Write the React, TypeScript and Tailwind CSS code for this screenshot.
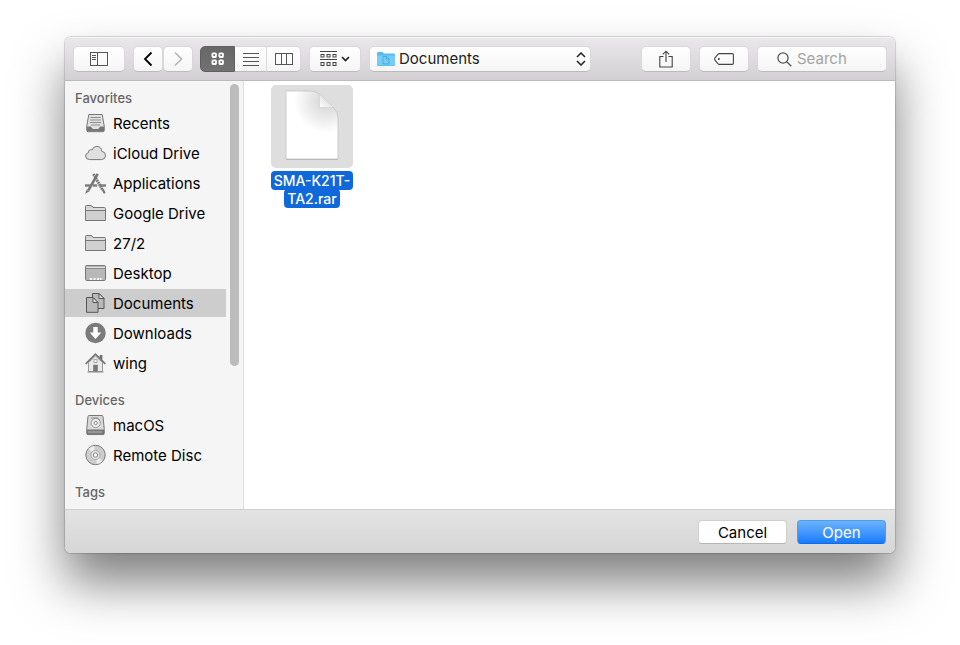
import { useState } from "react";
import type { ReactNode } from "react";

type Item = { name: string; icon: ReactNode };

function SidebarIcon({ children }: { children: ReactNode }) {
  return (
    <svg
      viewBox="0 0 22 22"
      className="w-[22px] h-[22px] flex-shrink-0"
      fill="none"
      stroke="#777"
      aria-hidden="true"
    >
      {children}
    </svg>
  );
}

const folderIcon = (
  <SidebarIcon>
    <path d="M1.5 18.5V4.5Q1.5 3.5 2.5 3.5H7.5L9 5.5H20.5Q21.5 5.5 21.5 6.5V18.5Z" fill="#d0d0d0" />
    <path d="M2 8.5H21" />
    <path d="M2.5 7H20.5" stroke="#e6e6e6" />
  </SidebarIcon>
);

const favorites: Item[] = [
  {
    name: "Recents",
    icon: (
      <SidebarIcon>
        <path d="M4.8 2.5H18.2L20.3 14.5V18.5Q20.3 19.7 19 19.7H4Q2.7 19.7 2.7 18.5V14.5Z" fill="#e2e2e2" />
        <path d="M3 14.5H7Q8 17 9.5 17H13.5Q15 17 16 14.5H20V19.3H3Z" fill="#777" stroke="none" />
        <path d="M6.5 5.5H16.5M6.2 8H16.8M5.8 10.5H17.2M7 13H16" stroke="#8c8c8c" />
      </SidebarIcon>
    ),
  },
  {
    name: "iCloud Drive",
    icon: (
      <SidebarIcon>
        <path
          d="M5.6 17.6Q1.6 17.4 1.6 14.1Q1.6 11.3 4.4 10.7Q4.2 8.1 6.5 7.7Q7.5 7.5 8.2 7.9Q9.4 4.4 12.8 4.4Q17.4 4.5 17.8 9.3Q21.6 9.9 21.6 13.6Q21.4 17.4 17.4 17.6Z"
          fill="#e0e0e0"
        />
      </SidebarIcon>
    ),
  },
  {
    name: "Applications",
    icon: (
      <SidebarIcon>
        <path d="M1 13.5H6.5M8.8 13.5H13.2M15.6 13.5H22" strokeWidth="2.6" stroke="#808080" />
        <path d="M13.7 1.8L4.4 18.4" strokeWidth="2.6" />
        <path d="M3.4 17.5L2.2 20.5L5.3 18.8" strokeWidth="1.2" />
        <path d="M9.4 2L18.7 18.2" strokeWidth="2.8" strokeDasharray="1.8 .5" />
        <path d="M19.2 18.2L20.3 20.4" strokeWidth="2.2" strokeLinecap="round" />
      </SidebarIcon>
    ),
  },
  { name: "Google Drive", icon: folderIcon },
  { name: "27/2", icon: folderIcon },
  {
    name: "Desktop",
    icon: (
      <SidebarIcon>
        <rect x="1.5" y="3.5" width="20" height="15" rx="1.2" fill="#b8b8b8" />
        <path d="M2 5.5H21" stroke="#dedede" />
        <path d="M2 6.5H21" stroke="#8a8a8a" />
        <path d="M6 17H8M9.5 17H11.5M13 17H15M16 17H17.5" stroke="#fff" strokeWidth="2" />
      </SidebarIcon>
    ),
  },
  {
    name: "Documents",
    icon: (
      <SidebarIcon>
        <g stroke="#555" fill="#b9b9b9" strokeLinejoin="round">
          <path d="M8.5 1.5H15L20 6.5V16.5H8.5Z" />
          <path d="M15 1.5V6.5H20Z" fill="#e0e0e0" />
          <path d="M2.5 5.5H9L14 10.5V20.3H2.5Z" />
          <path d="M9 5.5V10.5H14Z" fill="#e0e0e0" />
        </g>
      </SidebarIcon>
    ),
  },
  {
    name: "Downloads",
    icon: (
      <SidebarIcon>
        <circle cx="11.5" cy="11" r="10.2" fill="#7b7b7b" stroke="none" />
        <path d="M9.3 5H13.7V10.6H17.3L11.5 17L5.7 10.6H9.3Z" fill="#fff" stroke="none" />
      </SidebarIcon>
    ),
  },
  {
    name: "wing",
    icon: (
      <SidebarIcon>
        <path d="M15.8 3H18.4V8L15.8 6Z" fill="#707070" stroke="none" />
        <path d="M4.5 10.5L11.5 4L18.5 10.5V19.5H4.5Z" fill="#e9e9e9" stroke="#999" />
        <path d="M1.7 11.8L11.5 2.2L21.3 11.8" strokeWidth="1.8" />
        <rect x="10" y="7.5" width="3" height="3" fill="#f8f8f8" stroke="#aaa" />
        <rect x="9.2" y="12.8" width="4.6" height="6.8" fill="#777" stroke="none" />
        <path d="M3.5 20H19.5" stroke="#888" />
      </SidebarIcon>
    ),
  },
];

const devices: Item[] = [
  {
    name: "macOS",
    icon: (
      <SidebarIcon>
        <path d="M5 1.5H18Q18.9 1.5 19 2.5L20.3 15.5V19.5Q20.3 20.6 19.2 20.6H3.8Q2.7 20.6 2.7 19.5V15.5L4 2.5Q4.1 1.5 5 1.5Z" fill="#d9d9d9" />
        <path d="M3 15.5H20V20.2H3Z" fill="#777" stroke="none" />
        <path d="M4.5 18H18.5" stroke="#bbb" strokeWidth="2" strokeDasharray="1 1" />
        <circle cx="11.7" cy="9" r="4.6" fill="#ececec" stroke="#999" />
        <circle cx="11.7" cy="9" r="1.6" fill="#fff" stroke="#888" />
        <path d="M7 4H13.5L16.2 6.5" stroke="#888" />
      </SidebarIcon>
    ),
  },
  {
    name: "Remote Disc",
    icon: (
      <SidebarIcon>
        <circle cx="11.5" cy="11" r="9.7" fill="#cdcdcd" />
        <path d="M11.5 11L4.5 4.7Q7.4 2 10 2ZM11.5 11L18.5 17.3Q15.6 20 13 20Z" fill="#ededed" stroke="none" />
        <circle cx="11.5" cy="11" r="4.6" fill="#e4e4e4" stroke="#aaa" />
        <circle cx="11.5" cy="11" r="2.2" fill="#f6f6f6" stroke="#888" />
      </SidebarIcon>
    ),
  },
];

function Section({
  title,
  items,
  selected,
  onSelect,
}: {
  title: string;
  items: Item[];
  selected: string;
  onSelect: (name: string) => void;
}) {
  return (
    <section>
      <h2 className="pl-2.5 text-[13px] leading-[18px] font-medium text-[#666] mb-0.5">{title}</h2>
      <ul className="flex flex-col gap-0.5">
        {items.map((item) => (
          <li key={item.name}>
            <a
              href="#"
              onClick={(e) => {
                e.preventDefault();
                onSelect(item.name);
              }}
              className={`flex items-center h-7 pl-[19px] gap-[7px] text-[15px] text-black whitespace-nowrap ${
                selected === item.name ? "bg-[#cdcdcd]" : ""
              }`}
            >
              {item.icon}
              <span className="pt-0.5">{item.name}</span>
            </a>
          </li>
        ))}
      </ul>
    </section>
  );
}

const control =
  "h-[26px] flex items-center justify-center bg-linear-to-b from-white to-[#f5f5f5] border border-[#d9d7d9] border-b-[#bcbabc]";

function Toolbar({ folder, onFolder }: { folder: string; onFolder: (name: string) => void }) {
  return (
    <header className="flex items-start pt-[9px] pb-2 px-2 border-b border-[#bdbabd] bg-linear-to-b from-[#ebe8eb] to-[#d3d0d3] shadow-[inset_0_1px_0_#f6f4f6]">
      <button aria-label="Toggle sidebar" className={`${control} w-[52px] rounded-[5px] mr-2`}>
        <svg width="20" height="16" viewBox="0 0 20 16" fill="none" stroke="#555">
          <rect x="1.5" y="1.5" width="17" height="13" />
          <path d="M8.5 1.5V14.5" />
          <path d="M3 4.5H7M3 6.5H7M3 8.5H7" />
        </svg>
      </button>
      <div className="flex mr-[7px]">
        <button aria-label="Back" className={`${control} w-[30px] rounded-[5px]`}>
          <svg width="12" height="16" viewBox="0 0 12 16" fill="none" stroke="#000" strokeWidth="1.8">
            <path d="M9.5 1.5L3 8L9.5 14.5" />
          </svg>
        </button>
        <button aria-label="Forward" className={`${control} w-[30px] rounded-[5px]`}>
          <svg width="12" height="16" viewBox="0 0 12 16" fill="none" stroke="#b3b3b3" strokeWidth="1.6">
            <path d="M3 1.5L9.5 8L3 14.5" />
          </svg>
        </button>
      </div>
      <div className="flex mr-2">
        <button
          aria-label="Icon view"
          className="h-[26px] w-[35px] flex items-center justify-center rounded-l-[5px] bg-linear-to-b from-[#676767] to-[#727272] border border-[#606060]"
        >
          <svg width="16" height="16" viewBox="0 0 16 16" fill="none" stroke="#fff" strokeWidth="1.8">
            <rect x="2.4" y="2.4" width="3.6" height="3.6" rx=".8" />
            <rect x="9.4" y="2.4" width="3.6" height="3.6" rx=".8" />
            <rect x="2.4" y="9.4" width="3.6" height="3.6" rx=".8" />
            <rect x="9.4" y="9.4" width="3.6" height="3.6" rx=".8" />
          </svg>
        </button>
        <button aria-label="List view" className={`${control} w-[31px] border-x-0`}>
          <svg width="16" height="14" viewBox="0 0 16 14" stroke="#555">
            <path d="M0 1.5H16M0 5.5H16M0 9.5H16M0 13.5H16" />
          </svg>
        </button>
        <button aria-label="Column view" className={`${control} w-[35px] rounded-r-[5px]`}>
          <svg width="18" height="12" viewBox="0 0 18 12" fill="none" stroke="#555">
            <rect x=".5" y=".5" width="17" height="11" />
            <path d="M6.5 0V12M11.5 0V12" />
          </svg>
        </button>
      </div>
      <button aria-label="Group items" className={`${control} w-[52px] rounded-[5px] mr-2 gap-1`}>
        <svg width="17" height="16" viewBox="0 0 17 16" fill="none" stroke="#444">
          <path d="M0 .5H17M0 8.5H17" />
          <rect x="1" y="3.5" width="3" height="2.5" />
          <rect x="7" y="3.5" width="3" height="2.5" />
          <rect x="13" y="3.5" width="3" height="2.5" />
          <rect x="1" y="11.5" width="3" height="3" />
          <rect x="7" y="11.5" width="3" height="3" />
          <rect x="13" y="11.5" width="3" height="3" />
        </svg>
        <svg width="9" height="6" viewBox="0 0 9 6" fill="none" stroke="#222" strokeWidth="1.7">
          <path d="M1 1L4.5 4.5L8 1" />
        </svg>
      </button>
      <div className="relative w-[222px]">
        <select
          aria-label="Folder"
          value={folder}
          onChange={(e) => onFolder(e.target.value)}
          className="appearance-none w-full h-[26px] pl-[29px] pr-6 rounded-[5px] text-[15px] text-[#222] bg-linear-to-b from-white to-[#f5f5f5] border border-[#d9d7d9] border-b-[#bcbabc]"
        >
          {[...favorites, ...devices].map((item) => (
            <option key={item.name}>{item.name}</option>
          ))}
        </select>
        <svg className="absolute left-2 top-1.5 pointer-events-none" width="18" height="14" viewBox="0 0 18 14">
          <path d="M0 13V1Q0 0 1 0H5.5L7 1.5H17Q18 1.5 18 2.5V13Q18 14 17 14H1Q0 14 0 13Z" fill="#5bbcec" />
          <path d="M0 3.5H18V13.3H0Z" fill="#74cdf7" />
          <path d="M6 4.5H9.5L12 7V12H6ZM9.5 4.5V7H12" fill="none" stroke="#3fa4d6" strokeWidth=".8" />
        </svg>
        <svg
          className="absolute right-[5px] top-1.5 pointer-events-none"
          width="10"
          height="14"
          viewBox="0 0 10 14"
          fill="none"
          stroke="#222"
          strokeWidth="1.5"
        >
          <path d="M1 5L5 1L9 5M1 9L5 13L9 9" />
        </svg>
      </div>
      <div className="flex gap-2 ml-auto">
        <button aria-label="Share" className={`${control} w-[50px] rounded-[5px]`}>
          <svg width="14" height="18" viewBox="0 0 14 18" fill="none" stroke="#444" strokeWidth="1.1">
            <path d="M4.5 6.5H.8V17H13.2V6.5H9.5" />
            <path d="M7 12V1.2M3.8 4.3L7 1.2L10.2 4.3" />
          </svg>
        </button>
        <button aria-label="Edit tags" className={`${control} w-[50px] rounded-[5px]`}>
          <svg width="20" height="12" viewBox="0 0 20 12" fill="none" stroke="#444" strokeWidth="1.1">
            <path d="M5.5 .6H18.2Q19.4 .6 19.4 1.8V10.2Q19.4 11.4 18.2 11.4H5.5Q4.6 11.4 3.8 10.6L1 7.2Q.2 6 1 4.8L3.8 1.4Q4.6 .6 5.5 .6Z" />
            <circle cx="4.8" cy="6" r=".9" fill="#222" stroke="none" />
          </svg>
        </button>
        <label className={`${control} w-[130px] rounded-[5px] pl-[19px] gap-[5px]`}>
          <svg width="15" height="15" viewBox="0 0 15 15" fill="none" stroke="#555" strokeWidth="1.3" className="flex-shrink-0">
            <circle cx="6" cy="6" r="5.1" />
            <path d="M9.8 9.8L14.3 14.3" />
          </svg>
          <input
            type="search"
            aria-label="Search"
            placeholder="Search"
            className="w-full min-w-0 bg-transparent text-[15px] placeholder-[#a3a3a3] focus:outline-none"
          />
        </label>
      </div>
    </header>
  );
}

function FileTile() {
  return (
    <button className="flex flex-col items-center gap-1 w-[82px]">
      <span className="flex items-center justify-center w-full h-[83px] pb-1 rounded-[5px] bg-[#dedede]">
        <svg width="56" height="72" viewBox="0 0 56 72" aria-hidden="true">
          <defs>
            <radialGradient id="shade" gradientUnits="userSpaceOnUse" cx="42" cy="12" r="32">
              <stop offset="0" stopColor="#cfcfcf" />
              <stop offset=".35" stopColor="#e2e2e2" />
              <stop offset="1" stopColor="#fff" />
            </radialGradient>
            <linearGradient id="fold" x1="0" y1="1" x2=".5" y2=".5">
              <stop offset="0" stopColor="#fff" />
              <stop offset="1" stopColor="#e6e6e6" />
            </linearGradient>
          </defs>
          <path
            d="M2 2H27Q33 2 38 7L49 18Q54 23 54 29V70H2Z"
            fill="url(#shade)"
            stroke="#c3c3c3"
            strokeWidth=".8"
          />
          <path d="M35.5 5V18.5H49.5L38 7Z" fill="url(#fold)" stroke="#cfcfcf" strokeWidth=".6" />
          <path d="M2 70.5H54" stroke="#b0b0b0" strokeWidth=".8" />
        </svg>
      </span>
      <span className="text-center text-[14px] leading-[18px] font-medium text-white whitespace-nowrap">
        <span className="box-decoration-clone bg-[#1069da] rounded-[4px] px-[3px] py-px">
          SMA-K21T-
          <br />
          TA2.rar
        </span>
      </span>
    </button>
  );
}

export default function App() {
  const [selected, setSelected] = useState("Documents");

  return (
    <div className="flex min-h-screen bg-white px-[65px] pt-[37px] pb-[92px] font-['Inter',sans-serif]">
      <main className="flex-1 min-w-0 flex flex-col rounded-[6px] overflow-hidden shadow-[0_30px_50px_rgba(0,0,0,0.5),0_0_1px_1px_rgba(0,0,0,0.15)]">
        <Toolbar folder={selected} onFolder={setSelected} />

        <div className="flex flex-1">
          <aside className="flex bg-[#f5f5f5] border-r border-[#dcdcdc] pr-1">
            <nav className="w-[161px] flex flex-col gap-3.5 pt-2 pb-1">
              <Section title="Favorites" items={favorites} selected={selected} onSelect={setSelected} />
              <Section title="Devices" items={devices} selected={selected} onSelect={setSelected} />
              <Section title="Tags" items={[]} selected={selected} onSelect={setSelected} />
            </nav>
            <div className="ml-1 pt-[3px]">
              <div className="w-[9px] h-[282px] rounded-full bg-[#bcbcbc]" />
            </div>
          </aside>
          <div className="flex-1 bg-white pl-[27px] pt-1">
            <FileTile />
          </div>
        </div>

        <footer className="flex justify-end gap-2.5 pt-2.5 pb-[9px] px-[9px] border-t border-[#cfcfcf] bg-linear-to-b from-[#e3e3e3] to-[#d6d6d6]">
          <button className="w-[89px] h-6 rounded-[4px] bg-white border border-[#cfcfcf] border-b-[#b5b5b5] text-[15px] leading-none text-black">
            Cancel
          </button>
          <button className="w-[89px] h-6 rounded-[4px] bg-linear-to-b from-[#6ab3fa] to-[#147bfd] border border-[#4a9cf5] border-b-[#0f6be6] text-[15px] leading-none text-white">
            Open
          </button>
        </footer>
      </main>
    </div>
  );
}
